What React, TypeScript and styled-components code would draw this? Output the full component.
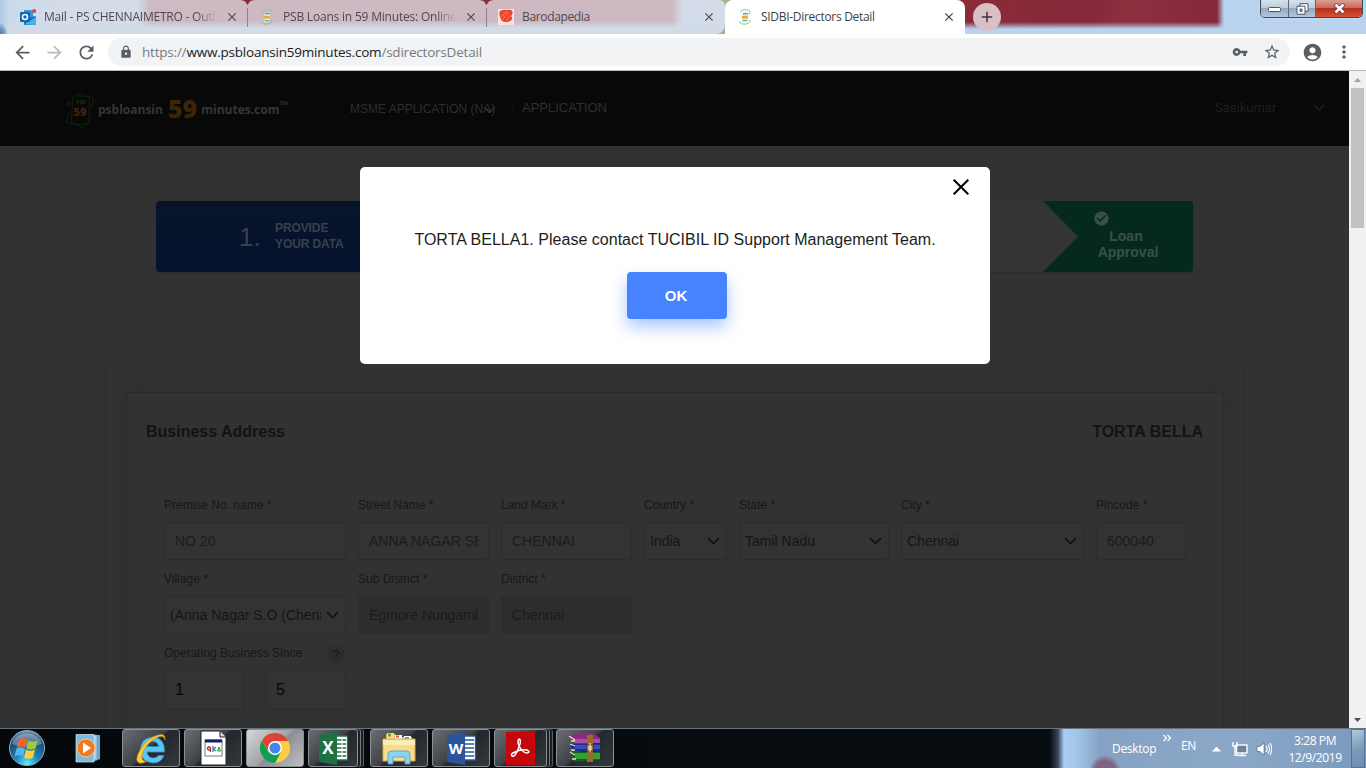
import React from 'react';
import styled, { createGlobalStyle, css } from 'styled-components';
import {
  MdArrowBack, MdArrowForward, MdRefresh, MdLock, MdVpnKey, MdStarBorder,
  MdAccountCircle, MdMoreVert, MdClose, MdAdd, MdCheckCircle,
} from 'react-icons/md';

const arial = '"Liberation Sans", Arial, sans-serif';
const segoe = '"Open Sans", "Noto Sans", sans-serif';

const Global = createGlobalStyle`
  * { box-sizing: border-box; }
  html, body { margin: 0; padding: 0; overflow: hidden; background: #323232; }
  svg { display: block; flex: none; }
`;

const Screen = styled.div`
  width: 1366px;
  height: 768px;
  display: flex;
  flex-direction: column;
  overflow: hidden;
  font-family: ${arial};
`;

/* ---------- Browser frame ---------- */

const TabStrip = styled.div`
  height: 34px;
  flex: none;
  display: flex;
  position: relative;
  background:
    linear-gradient(180deg, transparent 22px, #b9d3ee 29px) 964px 0 / 402px 34px no-repeat,
    linear-gradient(90deg, #8b2a38 0, #85283a 130px, #8e3040 160px, #84293a 253px, #b9d3ee 260px) 964px 0 / 402px 34px no-repeat,
    linear-gradient(90deg, #8b2a38 0, #8b2a38 715px, #a9b48c 717px, #a9b48c 740px, #8b2a38 742px);
`;

const BackTabs = styled.div`
  display: flex;
  width: 725px;
  flex: none;
  border-radius: 0 6px 9px 0;
  background:
    radial-gradient(circle at 0 20px, transparent 7px, transparent 9px) no-repeat,
    radial-gradient(ellipse 8px 12px at 0 34px, #4f78a4 0, #7ea3cb 60%, transparent 100%) no-repeat,
    linear-gradient(180deg, transparent 21px, #d2dce9 28px),
    linear-gradient(90deg, #aecbe9 0, #cbdbeb 10px, #d3dce8 60px, #d3dce8 138px, #cdbac3 150px, #cdb8c1 672px, #d3dce8 682px);
`;

const Tab = styled.div<{ $width: number; $lead: number; $active?: boolean; $line?: boolean }>`
  position: relative;
  width: ${p => p.$width}px;
  height: 34px;
  flex: none;
  display: flex;
  align-items: center;
  gap: 8px;
  padding: 0 9px 0 ${p => p.$lead}px;
  font: 12px/16px ${segoe};
  color: ${p => (p.$active ? '#3c4043' : '#4d4a50')};
  ${p => p.$active && css`background: #fff; border-radius: 8px 8px 0 0;`}
  ${p => p.$line && css`
    &::after {
      content: '';
      position: absolute;
      right: 0;
      top: 8px;
      width: 1px;
      height: 19px;
      background: #8d8088;
    }
    &::before {
      content: '';
      position: absolute;
      right: -6px;
      top: 0;
      width: 13px;
      height: 5px;
      background: #8b2a38;
      clip-path: polygon(0 0, 100% 0, 70% 25%, 50% 100%, 30% 25%);
    }
  `}
`;

const TabTitle = styled.span<{ $track: number; $fade?: boolean }>`
  flex: 1;
  overflow: hidden;
  white-space: nowrap;
  letter-spacing: ${p => p.$track}px;
  ${p => p.$fade && css`mask-image: linear-gradient(90deg, #000 88%, transparent);`}
`;

const NewTab = styled.div`
  width: 28px;
  height: 28px;
  margin: 3px 0 0 8px;
  border-radius: 50%;
  display: flex;
  align-items: center;
  justify-content: center;
  background: #d9bfc6;
  color: #45353c;
`;

const WindowButtons = styled.div`
  display: flex;
  height: 18px;
  margin: 0 3px 0 auto;
  border: 1px solid #38465a;
  border-top: 0;
  border-radius: 0 0 5px 5px;
  overflow: hidden;
  box-shadow: 0 0 2px #e7f3ff;
`;

const WindowButton = styled.div<{ $width: number; $close?: boolean }>`
  width: ${p => p.$width}px;
  display: flex;
  align-items: center;
  justify-content: center;
  border-right: ${p => (p.$close ? 0 : '1px solid #58677a')};
  background: ${p => p.$close
    ? 'linear-gradient(180deg, #dc9e94 0, #c9695c 46%, #b3301b 50%, #d9512f 100%)'
    : 'linear-gradient(180deg, #d4e1ee 0, #bccbdb 46%, #94a9c0 50%, #b2c8de 100%)'};
`;

const Toolbar = styled.div`
  height: 37px;
  flex: none;
  display: flex;
  align-items: center;
  background: #fff;
  border-bottom: 1px solid #b9babb;
  color: #5a5d61;
`;

const ToolSlot = styled.div<{ $width: number; $muted?: boolean }>`
  width: ${p => p.$width}px;
  display: flex;
  justify-content: center;
  color: ${p => (p.$muted ? '#b9bbbd' : 'inherit')};
`;

const Omnibox = styled.div`
  width: 1182px;
  height: 28px;
  border-radius: 14px;
  background: #f1f3f4;
  display: flex;
  align-items: center;
  padding: 0 2px 0 10px;
`;

const Url = styled.span`
  flex: 1;
  margin-left: 8px;
  font: 13.5px/20px ${segoe};
  letter-spacing: -0.21px;
  color: #777b7f;
  b { font-weight: 400; color: #202124; }
`;

/* ---------- Web page behind the backdrop ---------- */

const Viewport = styled.div`
  flex: 1;
  min-height: 0;
  display: flex;
  position: relative;
`;

const Page = styled.div`
  width: 1349px;
  height: 657px;
  overflow: hidden;
  background: #323232;
`;

const SiteHeader = styled.header`
  height: 75px;
  background: #080808;
  display: flex;
  align-items: center;
  padding-left: 65px;
  color: #2e2e2e;
`;

const Brand = styled.div`
  display: flex;
  align-items: center;
  width: 285px;
  height: 40px;
  margin-top: 3px;
  font: 700 12px/20px ${segoe};
  color: #363636;
`;

const BrandName = styled.span`
  margin-left: 3px;
`;

const BrandNumber = styled.span`
  margin: -5px 4px 0 5px;
  font: 800 25px/28px ${segoe};
  color: #3b2504;
`;

const Trademark = styled.span`
  align-self: flex-start;
  font: 700 11px/10px ${segoe};
  margin-top: 10px;
`;

const NavItem = styled.div<{ $size: number; $width: number; $shift?: number }>`
  position: relative;
  width: ${p => p.$width}px;
  margin-top: ${p => p.$shift ?? 0}px;
  font-size: ${p => p.$size}px;
  line-height: 16px;
  white-space: nowrap;
`;

const NavChevron = styled.span`
  position: absolute;
  left: 133px;
  top: 5px;
`;

const NavRule = styled.div`
  width: 1px;
  height: 16px;
  margin: 0 9px 0 0;
  background: #0e0e0e;
`;

const UserMenu = styled.div`
  display: flex;
  align-items: center;
  justify-content: space-between;
  width: 110px;
  margin: -1px 24px 0 auto;
  font: 13px/16px Roboto, ${arial};
  color: #1d1f25;
`;

const Steps = styled.div`
  display: flex;
  width: 1037px;
  height: 71px;
  margin: 55px 0 0 156px;
  border-radius: 4px;
  overflow: hidden;
  background: #343434;
  box-shadow: 0 1px 1px #2c2c2c;
`;

const ActiveStep = styled.div`
  width: 260px;
  display: flex;
  align-items: center;
  padding-left: 83px;
  background: linear-gradient(180deg, #081429, #04122e);
  color: #38404e;
`;

const StepNumber = styled.span`
  width: 36px;
  font: 26px/30px ${arial};
`;

const StepLabel = styled.span`
  font-weight: 700;
  font-size: 12px;
  line-height: 16px;
  margin-top: -2px;
  letter-spacing: -0.1px;
`;

const FinalStep = styled.div`
  width: 150px;
  margin-left: auto;
  padding: 9px 0 0 54px;
  background: #06291d;
  clip-path: polygon(0 0, 100% 0, 100% 100%, 0 100%, 35px 50%);
  color: #3a5047;
  font: 700 14px/16px ${arial};
`;

const FinalStepIcon = styled.div`
  margin-left: -4px;
`;

const FinalStepLabel = styled.div`
  width: 62px;
  margin-top: 1px;
  text-align: center;
`;

const FinalStepWord = styled.div<{ $pull?: number }>`
  margin-left: ${p => -(p.$pull ?? 0)}px;
`;

const OuterCard = styled.div`
  width: 1140px;
  height: 500px;
  margin: 89px 0 0 105px;
  padding: 30px 20px 0;
  border: 1px solid #2d2d2d;
  border-radius: 4px;
`;

const InnerCard = styled.div`
  height: 460px;
  padding: 0 19px;
  border: 1px solid #2b2b2b;
  border-radius: 3px;
  box-shadow: 0 0 12px #2f2f2f;
`;

const CardTitle = styled.div`
  display: flex;
  justify-content: space-between;
  padding: 29px 1px 17px 0;
  font-weight: 700;
  font-size: 16px;
  line-height: 20px;
  color: #131313;
`;

const FormPanel = styled.div`
  height: 380px;
  padding: 34px 15px 0 18px;
  border-radius: 4px;
  box-shadow: 0 0 4px #2f2f2f;
`;

const FieldRow = styled.div`
  display: flex;
  gap: 12px;
  height: 74px;
`;

const Field = styled.div<{ $width: number }>`
  width: ${p => p.$width}px;
  flex: none;
`;

const Label = styled.div`
  display: flex;
  justify-content: space-between;
  height: 29px;
  padding-top: 4px;
  font-size: 12px;
  line-height: 16px;
  white-space: nowrap;
  color: #171717;
`;

const Control = styled.div<{ $kind?: 'select' | 'disabled' | 'number' }>`
  display: flex;
  align-items: center;
  gap: 5px;
  height: ${p => (p.$kind === 'number' ? 40 : 38)}px;
  padding: 0 ${p => (p.$kind === 'select' ? '6px 0 5px' : '10px')};
  border: 1px solid #2c2c2c;
  border-radius: 3px;
  background: ${p => (p.$kind === 'disabled' ? '#2d2d2d' : '#333')};
  color: ${p => (p.$kind === 'number' ? '#050505' : p.$kind === 'select' ? '#151515' : '#1b1b1b')};
  font-size: ${p => (p.$kind === 'number' ? 16 : 14)}px;
`;

const Value = styled.span`
  flex: 1;
  overflow: hidden;
  white-space: nowrap;
  line-height: 20px;
`;

const Help = styled.span`
  width: 18px;
  height: 18px;
  margin: 1px 1px 0 0;
  border-radius: 50%;
  background: #2c2c2c;
  color: #161616;
  text-align: center;
  line-height: 18px;
`;

const NumberPair = styled.div`
  display: grid;
  grid-template-columns: 81px 81px;
  gap: 20px;
`;

/* ---------- Dialog ---------- */

const Dialog = styled.div`
  position: absolute;
  left: 360px;
  top: 96px;
  width: 630px;
  height: 197px;
  border-radius: 5px;
  background: #fff;
  color: #1c1c1c;
  display: flex;
  flex-direction: column;
  align-items: center;
`;

const DialogClose = styled.div`
  align-self: flex-end;
  margin: 12px 21px 0 0;
`;

const Message = styled.p`
  margin: 35px 0 0;
  font-size: 16px;
  line-height: 20px;
  letter-spacing: 0.02px;
  white-space: nowrap;
`;

const OkButton = styled.button`
  width: 100px;
  height: 47px;
  margin: 22px 0 0 4px;
  padding: 0 2px 0 0;
  border: 0;
  border-radius: 4px;
  background: #4783ff;
  box-shadow: 0 8px 16px rgba(71, 131, 255, 0.45);
  color: #fff;
  font: 700 15px/20px ${arial};
`;

const Scrollbar = styled.div`
  width: 17px;
  height: 657px;
  display: flex;
  flex-direction: column;
  align-items: center;
  background: #f1f1f1;
`;

const Thumb = styled.div`
  width: 13px;
  height: 140px;
  background: #c1c1c1;
  margin: 0 0 auto;
`;

/* ---------- Taskbar ---------- */

const Taskbar = styled.div`
  height: 40px;
  flex: none;
  display: flex;
  background:
    linear-gradient(180deg, #67737f 0, #67737f 1px, transparent 1px),
    radial-gradient(circle at 1105px 43px, rgba(120, 60, 90, 0.6) 10px, transparent 16px),
    linear-gradient(90deg, #05080b 0, #080d12 1050px, #39485a 1058px, #a9cdf1 1064px, #a4c8ec 1075px, #86a2c2 1100px, #8ba8c9 1240px, #7b99bc 1366px);
`;

const TaskSlot = styled.div<{ $width: number }>`
  width: ${p => p.$width}px;
  display: flex;
  align-items: center;
  justify-content: center;
`;

const TaskButton = styled.div<{ $width?: number; $active?: boolean; $stack?: boolean; $gap?: number }>`
  width: ${p => p.$width ?? 58}px;
  height: 38px;
  margin: 1px ${p => p.$gap ?? 4}px 0 0;
  display: flex;
  align-items: center;
  justify-content: center;
  border: 1px solid #8b9094;
  border-radius: 3px;
  background: ${p => p.$active
    ? 'linear-gradient(135deg, #d4d6d8 0, #a3a5a8 48%, #8b8e92 52%, #bfc1c4 100%)'
    : 'linear-gradient(135deg, #6b6e71 0, #3f4347 46%, #24282d 52%, #33383d 100%)'};
  ${p => p.$stack && css`box-shadow: 2px 0 0 #1b1f23, 3px 0 0 #747a7f, 5px 0 0 #1b1f23, 6px 0 0 #5b6065;`}
`;

const Tray = styled.div`
  display: flex;
  align-items: center;
  margin-left: auto;
  color: #fff;
  font: 12px/17px ${segoe};
`;

const TrayItem = styled.div<{ $width: number; $drop?: number; $lift?: number; $lead?: number }>`
  width: ${p => p.$width}px;
  margin-left: ${p => p.$lead ?? 0}px;
  padding-top: ${p => p.$drop ?? 0}px;
  padding-bottom: ${p => p.$lift ?? 0}px;
  letter-spacing: -0.3px;
  white-space: nowrap;
`;

const Clock = styled.div`
  width: 68px;
  text-align: center;
  letter-spacing: -0.4px;
  padding: 1px 0 0 2px;
`;

const ShowDesktop = styled.div`
  width: 14px;
  height: 39px;
  margin: 1px 1px 0 3px;
  border: 1px solid #5a7391;
  background: linear-gradient(160deg, #b4c9de, #7d9bbb 50%, #6c8cae);
`;

/* ---------- Drawings ---------- */

const Chevron = ({ w = 12, color = '#121212', stroke = 1.6 }: { w?: number; color?: string; stroke?: number }) => (
  <svg width={w} height={w * 0.65} viewBox="0 0 12 7.8">
    <path d="M1 1l5 5 5-5" fill="none" stroke={color} strokeWidth={stroke} />
  </svg>
);

const OutlookIcon = () => (
  <svg width="16" height="16" viewBox="0 0 16 16">
    <path d="M4 1h9v6h3v8H4z" fill="#2f9be0" />
    <path d="M4 8h12v8H4z" fill="#1670b8" />
    <path d="M4 15.5L16 8v8z" fill="#46b3ec" />
    <rect y="3" width="10" height="10" rx="1" fill="#0f67b4" />
    <circle cx="5" cy="8" r="2.5" fill="none" stroke="#fff" strokeWidth="1.5" />
    <circle cx="14.2" cy="2" r="2" fill="#e3424f" />
  </svg>
);

const PsbIcon = () => (
  <svg width="16" height="16" viewBox="0 0 16 16">
    <path d="M3 3q4-4 9-1.500 2 2 0 4M13 11q0 5-8 4-3-1-2-3" fill="none" stroke="#93c572" strokeWidth="1" />
    <path d="M5.500 4l6-.5-.8 9-5.700.5z" fill="#dfe9ee" />
    <path d="M6 4.600h5" stroke="#5ba6b5" strokeWidth="1.400" />
    <path d="M5 8.200h6.100" stroke="#f0a63c" strokeWidth="2.600" />
    <path d="M5.500 11.600h5" stroke="#67aea8" strokeWidth="1.100" />
  </svg>
);

const BarodaIcon = () => (
  <svg width="16" height="16" viewBox="0 0 16 16">
    <rect width="16" height="16" fill="#f5e3df" />
    <path d="M2 2q4-2 7-1 6-1 5.500 3 0 2-1.500 3 2 2 .5 4-2 2.500-6 2-4 0-5-4-2-4-.5-7z" fill="#e8472b" />
    <path d="M3 8l6-6M4.500 11l6-8M8 12l4-5" stroke="#f3957f" strokeWidth=".7" />
  </svg>
);

const LogoMark = () => (
  <svg width="30" height="36" viewBox="0 0 30 36">
    <g fill="none" stroke="#12200f" strokeWidth="1">
      <path d="M12 4l2-3 15 6-4 10M4 21l-3 9 17 5 3-4" />
      <rect x="7" y="4" width="17" height="28" rx="2" transform="rotate(3 15 18)" />
    </g>
    <path d="M4 9v6M2 12h5M26 21v5" stroke="#2a2a0e" strokeDasharray="1 1" />
    <text x="11" y="12" fontFamily="Open Sans" fontWeight="800" fontSize="5" fill="#0d2a1c">PSB</text>
    <text x="8.5" y="23.5" fontFamily="Open Sans" fontWeight="800" fontSize="11" fill="#43220a">59</text>
  </svg>
);

const StartOrb = () => (
  <svg width="38" height="38" viewBox="0 0 38 38">
    <defs>
      <radialGradient id="orb" cx=".5" cy=".95" r=".95">
        <stop offset="0" stopColor="#5ff0ff" />
        <stop offset=".35" stopColor="#1b87bd" />
        <stop offset=".75" stopColor="#1c4a70" />
        <stop offset="1" stopColor="#7d9db5" />
      </radialGradient>
    </defs>
    <circle cx="19" cy="19" r="17.5" fill="url(#orb)" stroke="#8fb0c4" />
    <path d="M4 15a15.500 14 0 0130 0q-15 5-30 0z" fill="#fff" opacity=".3" />
    <path d="M11 10.500q4-3 8.500 0l-2 8q-4.500-2-8.500 0z" fill="#f1652b" />
    <path d="M20.500 11.500q4 2.500 9 0l-2 8q-4.500 2-9 0z" fill="#9ccb3c" />
    <path d="M8.500 19.500q4-2.500 8.500 0l-2 8q-4-2.500-8.500 0z" fill="#58b4ec" />
    <path d="M18 20.500q4.500 2.500 9 0l-2 8q-4.500 2.500-9 0z" fill="#fcd03d" />
  </svg>
);

const MediaIcon = () => (
  <svg width="28" height="30" viewBox="0 0 28 30">
    <path d="M8 2h18v24l-5 2H8z" fill="#6aa9d3" />
    <path d="M5 2h18v25H5z" fill="#a9d2ea" stroke="#5c98c2" strokeWidth=".7" />
    <path d="M2 1.500h18V29H2z" fill="#7fb9dd" stroke="#d0e8f5" strokeWidth=".7" />
    <circle cx="12" cy="15" r="9" fill="#ee7a22" stroke="#fbc79a" />
    <path d="M9 9.500v11l8-5.500z" fill="#fff" />
  </svg>
);

const IeIcon = () => (
  <svg width="34" height="34" viewBox="0 0 34 34">
    <path d="M30.500 21H13q1 6 6.500 6 3 0 5-2.500h5.500Q27 32 19 32 6.500 31 6.500 19T19 6q12 1 11.500 15zM13 15.500h11.500q-1-5-5.500-5-5 0-6 5z" fill="#5cc4f4" stroke="#2b8fce" strokeWidth=".8" />
    <path d="M31 9q1-7-7-5Q13 7 6 19 0 30 5 32q3 1 8-2-6 1-5-6 3-10 12-16 10-6 11 1z" fill="#f8cf31" stroke="#c98d0d" strokeWidth=".6" />
  </svg>
);

const ScriptIcon = () => (
  <svg width="27" height="36" viewBox="0 0 27 36">
    <path d="M1 1h19l6 6v28H1z" fill="#fff" stroke="#222" />
    <path d="M20 1v6h6" fill="#ddd" stroke="#222" />
    <rect x="5" y="10" width="17" height="16" fill="#fff" stroke="#777" />
    <rect x="5" y="9.500" width="17" height="3" fill="#101a7a" />
    <circle cx="9" cy="18.500" r="1.500" fill="none" stroke="#b22" strokeWidth="1.300" />
    <path d="M10.500 19v3" stroke="#b22" strokeWidth="1.200" />
    <path d="M13 16v6M16 17l-2.500 2 2.500 2" stroke="#28a" strokeWidth="1.300" fill="none" />
    <path d="M17.500 21l1.500-4 1.500 4z" fill="none" stroke="#292" />
  </svg>
);

const ChromeIcon = () => (
  <svg width="30" height="30" viewBox="0 0 30 30">
    <circle cx="15" cy="15" r="15" fill="#ffcd40" />
    <path d="M2 7.500A15 15 0 0128.200 8H15l-6 4.500L8.500 18z" fill="#db4437" />
    <path d="M2 7.500L8.500 19l6.500 3 6-3-6 11A15 15 0 012 7.500z" fill="#0f9d58" />
    <circle cx="15" cy="15" r="7" fill="#fff" />
    <circle cx="15" cy="15" r="5.500" fill="#4285f4" />
  </svg>
);

const OfficeIcon = ({ letter, color }: { letter: string; color: string }) => (
  <svg width="31" height="34" viewBox="0 0 31 34">
    <path d="M17 5h12.500v24H17z" fill="#fff" stroke={color} strokeWidth="1.300" />
    <path d="M19 9h9M19 13h9M19 17h9M19 21h9M19 25h9" stroke={color} strokeWidth="1.400" />
    {letter === 'X' && <path d="M24 7v20" stroke="#fff" strokeWidth="1" />}
    <path d="M1 4l18-3v33L1 31z" fill={color} />
    <text x="10" y="22.500" textAnchor="middle" fontFamily="Open Sans" fontWeight="700" fontSize={letter === 'W' ? 15 : 17} fill="#fff">{letter}</text>
  </svg>
);

const ExplorerIcon = () => (
  <svg width="34" height="34" viewBox="0 0 34 34">
    <path d="M4 3h9l2 3h15v20H4z" fill="#e3b956" />
    <path d="M5 2h7v6H5z" fill="#f5dd8d" /><path d="M6 2.500h3v3H6z" fill="#4daa4a" />
    <path d="M13 4h7v4h-7z" fill="#fff" /><path d="M14 4.500h3v2h-3z" fill="#d0564a" />
    <path d="M22 5h7v4h-7z" fill="#fff" /><path d="M23 6h4v2h-4z" fill="#4aa7d5" />
    <path d="M1 8h32v22H1z" fill="#f5dd8d" stroke="#d2aa4c" />
    <path d="M1 9h32v5H1z" fill="#faedb4" />
    <path d="M6 33V23q0-3 4-3h14q4 0 4 3v10h-5v-7H11v7z" fill="#8ed3ee" stroke="#4a9dc4" strokeWidth=".8" />
  </svg>
);

const AcrobatIcon = () => (
  <svg width="29" height="33" viewBox="0 0 29 33">
    <rect width="29" height="33" fill="#c4070c" />
    <path d="M6 24q-2-2 3-4 6-3 12-2 4 2 0 3-4 0-8-7-2-5 0-7 2 0 1 5-2 7-5 11-2 2-3 1z" fill="none" stroke="#fff" strokeWidth="1.500" />
  </svg>
);

const WinrarIcon = () => (
  <svg width="34" height="30" viewBox="0 0 34 30">
    <path d="M1 2l23-2 8 5v5H7z" fill="#8d2a86" /><path d="M7 6h25v4H7z" fill="#b14aa4" />
    <path d="M2 10l5 1h25v7H4z" fill="#1e2d85" /><path d="M7 12h25v4H7z" fill="#2f51c4" />
    <path d="M2 19h30v8l-26 2z" fill="#16601f" /><path d="M7 20h25v6H7z" fill="#33a033" />
    <path d="M1 3l6 4M2 11l5 2M2 19l5 3M3 8h4M3 17h4M4 26h4" stroke="#e9dfc5" strokeWidth="1.300" />
    <path d="M19 2h6v27h-6z" fill="#9a682c" /><path d="M19 12h6v6h-6z" fill="#d5b56a" stroke="#4c3515" />
    <path d="M22 10v9" stroke="#eee" />
  </svg>
);

const NetworkIcon = () => (
  <svg width="16" height="16" viewBox="0 0 16 16">
    <rect x="4.500" y="4" width="10.500" height="8" fill="#6d839b" stroke="#fff" strokeWidth="1.400" />
    <path d="M6 14.500h8M10 12v2M1 1v4h4V1M3 5v9h3" fill="none" stroke="#fff" strokeWidth="1.400" />
  </svg>
);

const SpeakerIcon = () => (
  <svg width="16" height="16" viewBox="0 0 16 16">
    <path d="M1 5.500h3L8 2v12l-4-3.500H1z" fill="#fff" stroke="#4a5d72" strokeWidth=".6" />
    <path d="M10 5q2 3 0 6M12 3.500q3 4.500 0 9M14 2q3.500 6 0 12" fill="none" stroke="#fff" strokeWidth="1.100" />
  </svg>
);

const TrayArrow = styled.div`
  width: 9px;
  height: 5px;
  margin-left: 11px;
  background: #fff;
  clip-path: polygon(50% 0, 100% 100%, 0 100%);
`;

const Triangle = ({ up, color }: { up?: boolean; color: string }) => (
  <svg width="17" height="17" viewBox="0 0 17 17">
    <path d={up ? 'M5 11h7L8.500 7z' : 'M5 7h7l-3.500 4z'} fill={color} />
  </svg>
);

/* ---------- Form ---------- */

type FieldProps = { label: string; width: number; value: string; kind?: 'select' | 'disabled' };

const TextField = ({ label, width, value, kind }: FieldProps) => (
  <Field $width={width}>
    <Label>{label} *</Label>
    <Control $kind={kind}>
      <Value>{value}</Value>
      {kind === 'select' && <Chevron w={13} />}
    </Control>
  </Field>
);

const addressFields: FieldProps[] = [
  { label: 'Premise No. name', width: 182, value: 'NO 20' },
  { label: 'Street Name', width: 131, value: 'ANNA NAGAR SE' },
  { label: 'Land Mark', width: 131, value: 'CHENNAI' },
  { label: 'Country', width: 83, value: 'India', kind: 'select' },
  { label: 'State', width: 150, value: 'Tamil Nadu', kind: 'select' },
  { label: 'City', width: 183, value: 'Chennai', kind: 'select' },
  { label: 'Pincode', width: 90, value: '600040' },
];

const areaFields: FieldProps[] = [
  { label: 'Village', width: 182, value: '(Anna Nagar S.O (Chenn', kind: 'select' },
  { label: 'Sub District', width: 131, value: 'Egmore Nungamb', kind: 'disabled' },
  { label: 'District', width: 131, value: 'Chennai', kind: 'disabled' },
];

export default function App() {
  return (
    <Screen>
      <Global />
      <TabStrip>
        <BackTabs>
          <Tab $width={248} $lead={20} $line>
            <OutlookIcon /><TabTitle $track={-0.22} $fade>Mail - PS CHENNAIMETRO - Outl</TabTitle><MdClose size={14} />
          </Tab>
          <Tab $width={239} $lead={11} $line>
            <PsbIcon /><TabTitle $track={-0.2} $fade>PSB Loans in 59 Minutes: Online L</TabTitle><MdClose size={14} />
          </Tab>
          <Tab $width={238} $lead={11}>
            <BarodaIcon /><TabTitle $track={-0.35}>Barodapedia</TabTitle><MdClose size={14} />
          </Tab>
        </BackTabs>
        <Tab $width={240} $lead={12} $active>
          <PsbIcon /><TabTitle $track={-0.3}>SIDBI-Directors Detail</TabTitle><MdClose size={14} />
        </Tab>
        <NewTab><MdAdd size={18} /></NewTab>
        <WindowButtons>
          <WindowButton $width={28}>
            <svg width="13" height="6"><rect x=".5" y="1.500" width="12" height="4" rx="1" fill="#fff" stroke="#4a5666" /></svg>
          </WindowButton>
          <WindowButton $width={27}>
            <svg width="13" height="12" viewBox="0 0 13 12">
              <path d="M4 .7h8v7.500H4z" fill="#fff" stroke="#4a5666" />
              <path d="M1 3.200h8v8H1z" fill="#fff" stroke="#4a5666" />
              <path d="M4 6h2v2.500H4z" fill="#9fb3c8" stroke="#4a5666" />
            </svg>
          </WindowButton>
          <WindowButton $width={46} $close>
            <svg width="13" height="11" viewBox="0 0 13 11">
              <path d="M2 1l9 9M11 1l-9 9" stroke="#5a3a40" strokeWidth="4" />
              <path d="M2.500 1.500l8 8M10.500 1.500l-8 8" stroke="#fff" strokeWidth="2.500" />
            </svg>
          </WindowButton>
        </WindowButtons>
      </TabStrip>

      <Toolbar>
        <ToolSlot $width={44}><MdArrowBack size={21} /></ToolSlot>
        <ToolSlot $width={20} $muted><MdArrowForward size={21} /></ToolSlot>
        <ToolSlot $width={44}><MdRefresh size={21} /></ToolSlot>
        <Omnibox>
          <ToolSlot $width={16}><MdLock size={14} /></ToolSlot>
          <Url>https://<b>www.psbloansin59minutes.com</b>/sdirectorsDetail</Url>
          <ToolSlot $width={32}><MdVpnKey size={16} /></ToolSlot>
          <ToolSlot $width={32}><MdStarBorder size={18} /></ToolSlot>
        </Omnibox>
        <ToolSlot $width={44}><MdAccountCircle size={21} /></ToolSlot>
        <ToolSlot $width={20}><MdMoreVert size={20} /></ToolSlot>
      </Toolbar>

      <Viewport>
        <Page>
          <SiteHeader>
            <Brand>
              <LogoMark />
              <BrandName>psbloansin</BrandName>
              <BrandNumber>59</BrandNumber>
              <span>minutes.com</span>
              <Trademark>™</Trademark>
            </Brand>
            <NavItem $size={12} $width={162}>
              MSME APPLICATION (NA)
              <NavChevron><Chevron w={13} color="#303030" stroke={1.4} /></NavChevron>
            </NavItem>
            <NavRule />
            <NavItem $size={13} $width={90} $shift={-2}>APPLICATION</NavItem>
            <UserMenu>Sasikumar<Chevron w={12} color="#22252b" stroke={1.2} /></UserMenu>
          </SiteHeader>
          <Steps>
            <ActiveStep>
              <StepNumber>1.</StepNumber>
              <StepLabel>PROVIDE<br />YOUR DATA</StepLabel>
            </ActiveStep>
            <FinalStep>
              <FinalStepIcon><MdCheckCircle size={17} /></FinalStepIcon>
              <FinalStepLabel>
                <FinalStepWord $pull={4}>Loan</FinalStepWord>
                <FinalStepWord>Approval</FinalStepWord>
              </FinalStepLabel>
            </FinalStep>
          </Steps>
          <OuterCard>
            <InnerCard>
              <CardTitle><span>Business Address</span><span>TORTA BELLA</span></CardTitle>
              <FormPanel>
                <FieldRow>{addressFields.map(f => <TextField key={f.label} {...f} />)}</FieldRow>
                <FieldRow>{areaFields.map(f => <TextField key={f.label} {...f} />)}</FieldRow>
                <FieldRow>
                  <Field $width={182}>
                    <Label>Operating Business Since<Help>?</Help></Label>
                    <NumberPair>
                      <Control $kind="number">1</Control>
                      <Control $kind="number">5</Control>
                    </NumberPair>
                  </Field>
                </FieldRow>
              </FormPanel>
            </InnerCard>
          </OuterCard>
        </Page>
        <Scrollbar>
          <Triangle up color="#a3a3a3" />
          <Thumb />
          <Triangle color="#505050" />
        </Scrollbar>
        <Dialog>
          <DialogClose>
            <svg width="16" height="16" viewBox="0 0 16 16"><path d="M.7.7l14.600 14.600M15.300.7L.7 15.300" stroke="#000" strokeWidth="2" /></svg>
          </DialogClose>
          <Message>TORTA BELLA1. Please contact TUCIBIL ID Support Management Team.</Message>
          <OkButton>OK</OkButton>
        </Dialog>
      </Viewport>

      <Taskbar>
        <TaskSlot $width={54}><StartOrb /></TaskSlot>
        <TaskSlot $width={68}><MediaIcon /></TaskSlot>
        <TaskButton><IeIcon /></TaskButton>
        <TaskButton><ScriptIcon /></TaskButton>
        <TaskButton $active><ChromeIcon /></TaskButton>
        <TaskButton $width={50} $stack $gap={12}><OfficeIcon letter="X" color="#1e7145" /></TaskButton>
        <TaskButton><ExplorerIcon /></TaskButton>
        <TaskButton><OfficeIcon letter="W" color="#2a5699" /></TaskButton>
        <TaskButton $width={53} $stack $gap={9}><AcrobatIcon /></TaskButton>
        <TaskButton><WinrarIcon /></TaskButton>
        <Tray>
          <TrayItem $width={50}>Desktop</TrayItem>
          <svg width="10" height="30" viewBox="0 0 10 30"><path d="M1.500 2l3 3-3 3M5.500 2l3 3-3 3" fill="none" stroke="#fff" strokeWidth="1.300" /></svg>
          <TrayItem $width={20} $lift={5} $lead={9}>EN</TrayItem>
          <TrayItem $width={31} $drop={2}><TrayArrow /></TrayItem>
          <TrayItem $width={24} $drop={1}><NetworkIcon /></TrayItem>
          <TrayItem $width={24} $drop={1}><SpeakerIcon /></TrayItem>
          <Clock>3:28 PM<br />12/9/2019</Clock>
          <ShowDesktop />
        </Tray>
      </Taskbar>
    </Screen>
  );
}
